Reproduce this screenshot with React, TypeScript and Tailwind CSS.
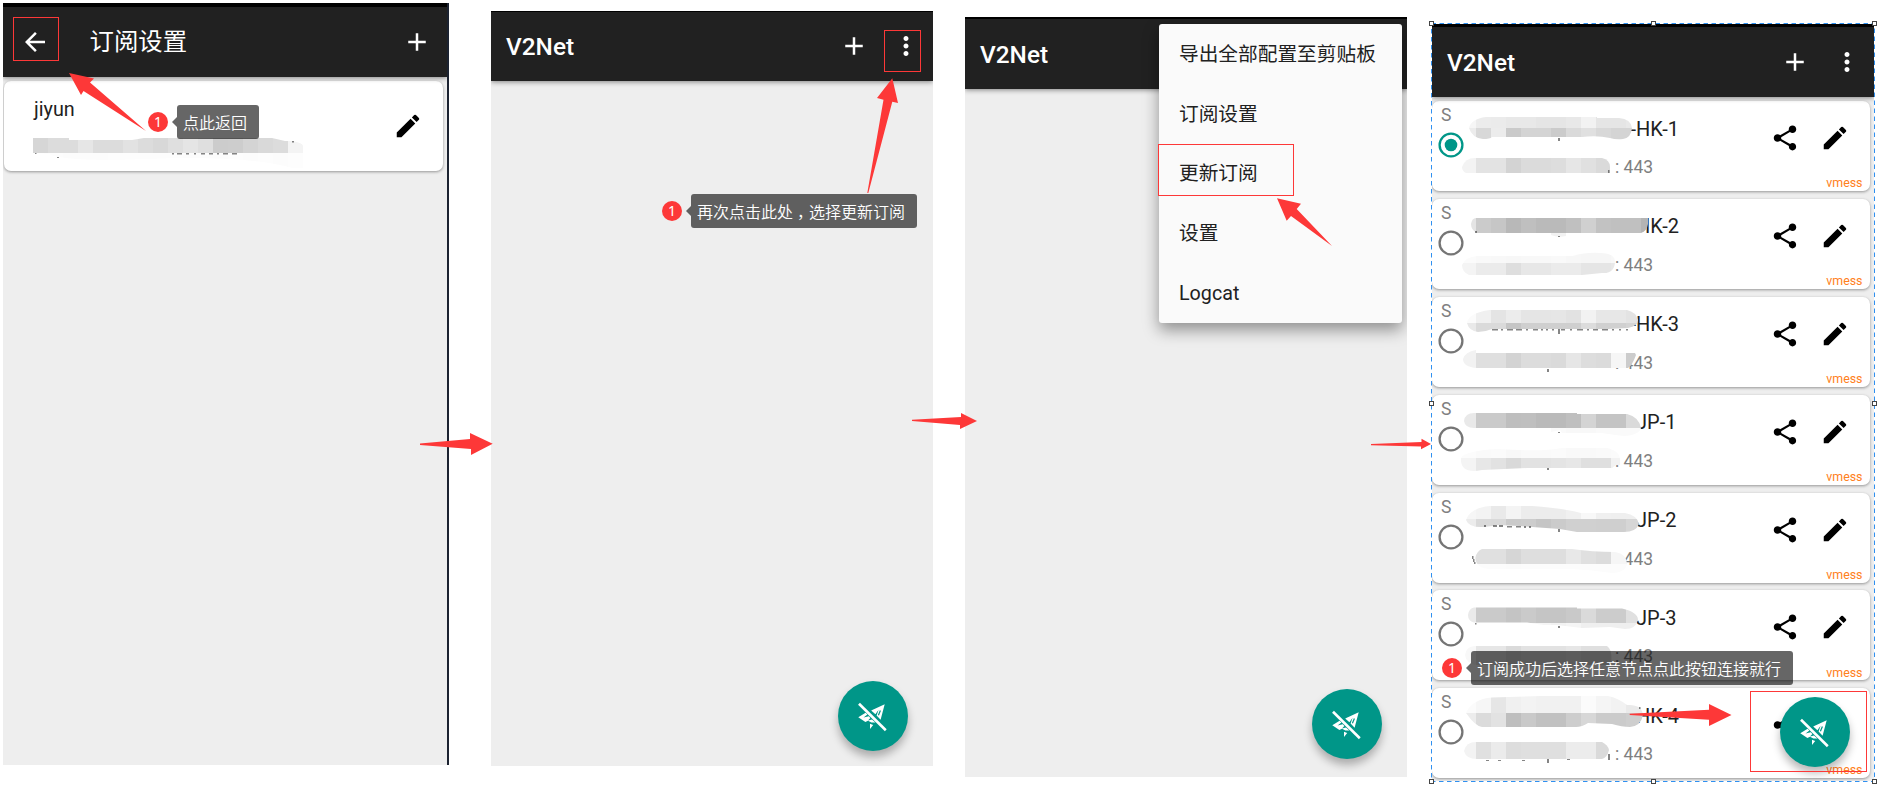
import React from "react";
import { MdAdd, MdArrowBack, MdEdit, MdMoreVert, MdShare } from "react-icons/md";

type Band = { y: number; h: number; c: string };
type Smudge = { d: string; bands: Band[]; x0?: number; marks?: number[][] };
type Node = { name: string; selected?: boolean; title: Smudge; sub: Smudge };

/* Mosaic strokes: each band is a row of 15px blocks, two hex digits per grey level. */
const nodes: Node[] = [
  {
    name: "-HK-1",
    selected: true,
    title: {
      d: "M37 27Q39 18 54 16H165V17H187Q199 18 200 27Q199 37 191 38Q184 39 178 37Q165 34 150 36H60Q58 38 51 38Q40 37 37 27Z",
      bands: [
        { y: 8, h: 19, c: "f6ecebe8e8e5e5e8f2e5e5e8" },
        { y: 27, h: 14, c: "ecd8eccad4d4cbdae0d8d4d4" },
      ],
      marks: [[126, 37, 2, 3]],
    },
    sub: {
      d: "M30 66Q33 57 43 57H170Q178 59 178 66V72H34Q30 70 30 66Z",
      bands: [{ y: 50, h: 26, c: "f3e3e3d3dbdbdde6e0dadada" }],
      marks: [[176, 69, 1.5, 3]],
    },
  },
  {
    name: "-HK-2",
    title: {
      d: "M39 25Q40 19 44 19H216V25Q215 32 209 34H45Q39 31 39 25ZM119 34H134V37Q126 39 119 36Z",
      bands: [
        { y: 10, h: 24, c: "e4cbc6b8bfbabac0d0c2c0c0b4" },
        { y: 34, h: 8, c: "f2f2f2f2f2f2f2f2" },
      ],
      marks: [[43, 32, 2, 2], [126, 37, 2, 1]],
    },
    sub: {
      d: "M30 66Q33 58 45 57H140Q155 53 168 54Q182 54 183 62Q183 75 170 74L150 76H37Q30 73 30 66Z",
      bands: [
        { y: 50, h: 14, c: "fbf9f8f7f8f8f9f7f6f6f8" },
        { y: 64, h: 14, c: "f4ebebdee7e7ebebe5e5e8" },
      ],
    },
  },
  {
    name: "-HK-3",
    title: {
      d: "M35 26Q36 16 58 13H195Q204 15 206 23Q206 29 196 31L176 32H60Q53 35 46 35Q37 34 35 26Z",
      bands: [
        { y: 8, h: 18, c: "fbf0e4ece5e5e6e2f2e7e7e3e3" },
        { y: 26, h: 12, c: "e9dadac5cfcfcfcfdcd0d0d4d4" },
      ],
      marks: [[60, 32, 6, 1.5], [69, 32, 2, 1.5], [75, 32, 6, 1.5], [84, 32, 6, 1.5], [94, 32, 2, 1.5], [101, 32, 5, 1.5], [109, 32, 2, 1.5], [114, 32, 2, 1.5], [120, 32, 2, 1.5], [126, 32, 2, 5], [129, 32, 4, 1.5], [138, 32, 2, 1.5], [145, 32, 6, 1.5], [155, 32, 2, 1.5], [161, 32, 5, 1.5], [170, 32, 6, 1.5], [180, 32, 2, 1.5], [187, 32, 2, 1.5], [194, 32, 2, 1.5]],
    },
    sub: {
      d: "M31 62Q33 55 44 53V56H203L204 58Q200 69 196 71H45Q31 70 31 62Z",
      bands: [{ y: 50, h: 24, c: "f2dfdfd3dcdcdae6dddbf6cc" }],
      marks: [[115, 72, 2, 3]],
    },
  },
  {
    name: "-JP-1",
    title: {
      d: "M32 26Q33 18 42 18H145V19H195Q207 22 209 33Q207 40 192 41Q182 40 170 38H130L128 35L119 37V33H42Q33 33 32 26Z",
      bands: [
        { y: 10, h: 23, c: "e9cacabebfbababfd4c4c4dada" },
        { y: 33, h: 9, c: "fafafafafaf7faf8f8fafafafa" },
      ],
      marks: [[126, 37, 2, 1]],
    },
    sub: {
      d: "M29 63Q32 56 65 54Q110 57 130 53H175Q188 56 188 65V70H184L180 73H95L50 75Q30 79 29 66Z",
      bands: [
        { y: 50, h: 13, c: "fcfafbf8fafafbf9f9fafb" },
        { y: 63, h: 15, c: "f4e7e2d9e2e2e4e7dfdff2" },
      ],
      marks: [[115, 73, 2, 2]],
    },
  },
  {
    name: "-JP-2",
    title: {
      d: "M34 27Q38 15 58 13H100Q130 15 149 20H193Q205 22 207 31Q204 39 192 39H145L128 36L100 34L88 33L65 32Q38 38 34 27Z",
      bands: [
        { y: 8, h: 17.5, c: "f6f3e9f4ecececf0f8f0efefef" },
        { y: 25.5, h: 16, c: "ecdad9caccc5cbd0d0cfcfd6d6" },
      ],
      marks: [[52, 32, 2, 2], [61, 32, 4, 2], [67, 32, 4, 2], [75, 33, 5, 1.5], [84, 33, 5, 1.5], [92, 33, 2, 2], [97, 33, 2, 2], [126, 36, 2, 3]],
    },
    sub: {
      d: "M43 65Q45 58 50 56H140Q160 59 183 59Q195 61 195 72Q192 80 180 80Q160 77 140 76H58Q45 76 43 65Z",
      bands: [
        { y: 50, h: 20.5, c: "ebe0e0d6dededee8e0dcf6f3" },
        { y: 70.5, h: 10, c: "fdfcfcfbfcfcfcfcfcfcfcfc" },
      ],
      marks: [[40, 63, 1.5, 3], [41, 66, 1.5, 3], [42, 69, 1.5, 2]],
    },
  },
  {
    name: "-JP-3",
    title: {
      d: "M36 25Q37 18 42 17.5H145V18.5H190Q206 22 206 30Q204 39 193 39L178 37L150 38L125 35L112 35L95 32.5H42Q36 31 36 25Z",
      bands: [
        { y: 10, h: 22.5, c: "eacacac4cac5c5c9dacccce0e0" },
        { y: 32.5, h: 9, c: "f8f5f5f2f5f5f2f5efefefefef" },
      ],
      marks: [[43, 33, 1.5, 1.5], [126, 36, 2, 2]],
    },
    sub: {
      d: "M33 65Q34 57 42 56H175Q181 60 180 75H44Q34 73 33 65Z",
      bands: [{ y: 50, h: 30, c: "f8e6e6dae2e2e2e6dfdff2f2" }],
    },
  },
  {
    name: "-HK-4",
    title: {
      d: "M34 25Q40 11 60 9.5L110 8H176Q186 10 195 17Q210 16 211 27Q209 38 198 39Q190 39 180 36L156 35Q150 39 144 39H50Q43 38 34 25Z",
      bands: [
        { y: 5, h: 20, c: "fbf6e6f0f3f1f1f1fbf5f2eaea" },
        { y: 25, h: 16, c: "ecdbe2bec9c1c1cdd7cbcbcece" },
      ],
      marks: [[207, 19, 1.5, 2]],
    },
    sub: {
      d: "M32 63Q34 54 44 54H170Q176 57 177 62Q175 70 170 71H45Q34 71 32 63Z",
      bands: [{ y: 50, h: 24, c: "f3e0ebdddfdfdfececdada" }],
      marks: [[54, 72, 3, 1], [66, 72, 3, 1], [90, 72, 3, 1], [115, 71, 2, 4], [135, 71, 3, 1], [176, 66, 2, 6]],
    },
  },
];

const bookmarkSmudge: Smudge = {
  d: "M29 57H65V59H128L140 57H268L281 60H288Q299 62 299 65V87H288Q250 76 170 77Q60 82 45 73L29 72Z",
  x0: 29,
  bands: [
    { y: 50, h: 22, c: "d6dcdce6dcdce2dcd8dfe5dfcccdd4d9dcf4" },
    { y: 72, h: 16, c: "fdfdfcfcfcfdfdfdfdfdfcfcfcfdfcfdfcfd" },
  ],
  marks: [[31, 72, 1.5, 1], [53, 76, 2, 1], [168, 72, 2, 1.5], [173, 72, 5, 1.5], [182, 72, 3, 1.5], [190, 72, 2, 1.5], [197, 72, 4, 1.5], [205, 72, 4, 1.5], [213, 72, 2, 1.5], [219, 72, 5, 1.5], [228, 72, 5, 1.5], [288, 60, 2, 1.5]],
};

function SmudgeArt({ s, id }: { s: Smudge; id: string }) {
  const x0 = s.x0 ?? 29;
  return (
    <g>
      <clipPath id={id}>
        <path d={s.d} />
      </clipPath>
      <g clipPath={`url(#${id})`} shapeRendering="crispEdges">
        {s.bands.flatMap((b, j) =>
          (b.c.match(/../g) ?? []).map((v, i) => (
            <rect key={`${j}-${i}`} x={x0 + i * 15} y={b.y} width={15} height={b.h} fill={`#${v}${v}${v}`} />
          )),
        )}
      </g>
      {s.marks?.map(([x, y, w, h], i) => (
        <rect key={i} x={x} y={y} width={w} height={h} fill="#333" fillOpacity="0.6" />
      ))}
    </g>
  );
}

function Header({ title, back, menu = true, strip }: { title: string; back?: boolean; menu?: boolean; strip: string }) {
  return (
    <header className="relative z-10 shrink-0 bg-[#212121] text-white shadow-[0_1px_5px_rgba(0,0,0,0.45)]">
      <div className={`bg-black ${strip}`} />
      <div className="flex h-[70px] items-center">
        {back && <MdArrowBack className="mr-[39.5px] ml-[17px] size-[30px]" />}
        {back ? (
          <h1 className="text-[24.4px] leading-8">{title}</h1>
        ) : (
          <h1 className="ml-[15px] pt-px text-[24.4px] leading-8 font-medium">{title}</h1>
        )}
        <div className={`ml-auto flex items-center gap-[22px] ${menu ? "pr-[12.5px]" : "pr-[15px]"}`}>
          <MdAdd className="size-[30px]" />
          {menu && <MdMoreVert className="size-[30px]" />}
        </div>
      </div>
    </header>
  );
}

function Fab({ place }: { place: string }) {
  return (
    <button
      className={`absolute z-10 flex size-[70px] items-center justify-center rounded-full bg-[#009688] shadow-[0_6px_9px_rgba(0,0,0,0.28)] ${place}`}
    >
      <svg viewBox="-18 -18 36 36" className="size-9">
        <path
          fill="#fff"
          d="M11.7-11.8L7.6 3.8L3.6-.6L5.6-6.2L2.4-1.8L-1.8-5.6ZM-14.7 1.3L-7.4-3.2L-5.6-1.4L-9.4 1.6L-4.2 .2L-2.6 2L-5 4.6L-1 3.4L2.4 6.6L-1.6 6.4L-5 4.8L-7.6 6ZM-3 7.8L.2 9L-3 13Z"
        />
        <path stroke="#009688" strokeWidth="1.2" d="M7.4-5.6L5.4-.8" />
        <path stroke="#fff" strokeWidth="2.6" d="M-14-12.2L12.8 14.2" />
      </svg>
    </button>
  );
}

function NodeCard({ node, index }: { node: Node; index: number }) {
  return (
    <li className="relative flex h-[90px] w-[438px] rounded-[7px] bg-white shadow-[0_1px_3px_rgba(0,0,0,0.38)]">
      <div className="flex w-[38px] shrink-0 flex-col">
        <span className="pt-[4px] pl-[9px] text-[17.5px] leading-5 text-[#808080]">S</span>
        <svg viewBox="0 0 26 26" className="mt-[7px] ml-[6px] size-[26px]">
          <circle cx="13" cy="13" r="11.4" fill="none" strokeWidth="2.3" stroke={node.selected ? "#009688" : "#757575"} />
          {node.selected && <circle cx="13" cy="13" r="6.3" fill="#009688" />}
        </svg>
      </div>
      <div className="flex flex-col pt-[15.5px]">
        <span className="pl-[160.5px] text-[20px] leading-6 text-[#212121]">{node.name}</span>
        <span className="mt-[16.5px] pl-[145px] text-[17.5px] leading-5 text-[#808080]">: 443</span>
      </div>
      <div className="ml-auto flex flex-col items-end">
        <div className="mt-[22px] flex gap-[19.5px] pr-[20.5px] text-black">
          <MdShare className="size-[30px]" />
          <MdEdit className="size-[30px]" />
        </div>
        <span className="mt-auto pr-[7.5px] pb-[0.9px] text-[12.4px] leading-[15px] font-[450] text-[#ff8020]">vmess</span>
      </div>
      <svg className="absolute top-0 left-0 h-[90px] w-[230px]">
        <SmudgeArt s={node.title} id={`t${index}`} />
        <SmudgeArt s={node.sub} id={`s${index}`} />
      </svg>
    </li>
  );
}

function Tip({ text, place, width }: { text: string; place: string; width: string }) {
  const parts = text.split("，");
  return (
    <div className={`absolute z-20 flex items-center text-white ${place}`}>
      <span className="flex size-5 items-center justify-center rounded-full bg-[#fd3838] font-['Noto_Sans','Open_Sans',sans-serif] text-[14px] leading-5">
        1
      </span>
      <svg viewBox="0 0 5 10" className="ml-1 h-2.5 w-[5px]">
        <path d="M5 0V10L0 5Z" fill="#000" fillOpacity="0.6" />
      </svg>
      <span
        className={`flex h-[34px] items-center rounded-[3px] bg-black/60 pl-[6px] font-['Noto_Sans_CJK_SC',sans-serif] text-[16px] leading-6 font-[350] whitespace-nowrap ${width}`}
      >
        {parts[0]}
        {parts.length > 1 && <span className="w-4 pl-1 [font-feature-settings:'halt']">，</span>}
        {parts[1]}
      </span>
    </div>
  );
}

const handles = [
  [1431.5, 23.5], [1653.5, 23.5], [1874.5, 23.5],
  [1431.5, 403.5], [1874.5, 403.5],
  [1431.5, 781.5], [1653.5, 781.5], [1874.5, 781.5],
];

function Annotations() {
  return (
    <svg viewBox="0 0 1897 809" className="pointer-events-none absolute top-0 left-0 z-30 h-[809px] w-[1897px]">
      <g fill="none" stroke="#fd3838" shapeRendering="crispEdges">
        <rect x="13.5" y="17.5" width="45" height="43" />
        <rect x="884.5" y="30.5" width="36" height="41" />
        <rect x="1158.5" y="144.5" width="135" height="51" />
        <rect x="1750.5" y="691.5" width="116" height="80" />
      </g>
      <g fill="#fd3838">
        <path d="M69 73L94 78.5L90 82.5L146 131L83.5 91L81 95Z" />
        <path d="M892.3 78.3L877 98L883.5 99.7L867.3 193L868.3 193L892.3 101.7L898 103Z" />
        <path d="M1277 198.3L1301 203.7L1296.7 209L1332 246L1291 216L1286.7 220.7Z" />
        <path d="M420 443.6V445L471 449V455L492.7 443.7L470 433V439Z" />
        <path d="M912 419.7V421L960 425V429L977 421L961 413V417Z" />
        <path d="M1371 444V445.2L1421 446.5V449.3L1431 444L1421.5 438.7V442Z" />
        <path d="M1629.7 713.7V715L1709 719.7V726L1731.5 715L1709 704V709.8Z" />
      </g>
      <rect x="1431.5" y="23.5" width="443" height="758" fill="none" stroke="#2f90f0" strokeDasharray="4.5 3.5" />
      <g fill="#fff" stroke="#444" shapeRendering="crispEdges">
        {handles.map(([x, y]) => (
          <rect key={`${x}-${y}`} x={x - 2} y={y - 2} width="4" height="4" />
        ))}
      </g>
    </svg>
  );
}

const menuItems = ["导出全部配置至剪贴板", "订阅设置", "更新订阅", "设置", "Logcat"];

export default function App() {
  return (
    <main className="relative flex h-[809px] w-[1897px] items-start overflow-hidden bg-white font-[Roboto,'Noto_Sans_CJK_SC',sans-serif]">
      <section className="relative mt-[3px] ml-[3px] flex h-[762px] w-[446px] flex-col overflow-hidden border-r-2 border-[#1c2331] bg-[#eeeeee]">
        <Header title="订阅设置" back menu={false} strip="h-1" />
        <div className="relative mt-1 ml-px flex h-[90px] w-[439px] items-center justify-between rounded-[7px] bg-white pr-[20px] pl-[30px] shadow-[0_1px_3px_rgba(0,0,0,0.38)]">
          <span className="mb-[33px] text-[19.8px] leading-6 text-[#212121]">jiyun</span>
          <MdEdit className="size-[30px] text-black" />
          <svg className="absolute top-0 left-0 h-[90px] w-[320px]">
            <SmudgeArt s={bookmarkSmudge} id="bm" />
          </svg>
        </div>
      </section>

      <section className="relative mt-[11px] ml-[42px] flex h-[755px] w-[442px] flex-col overflow-hidden bg-[#eeeeee]">
        <Header title="V2Net" strip="h-px -mb-px" />
        <Fab place="right-[25px] bottom-[15px]" />
      </section>

      <section className="relative mt-[17px] ml-8 flex h-[760px] w-[442px] flex-col overflow-hidden bg-[#eeeeee]">
        <Header title="V2Net" strip="h-[2px]" />
        <ul className="absolute top-[7px] right-[5px] z-20 w-[243px] rounded-[3px] bg-[#fafafa] pt-px text-[19.7px] text-[#212121] shadow-[0_7px_16px_rgba(0,0,0,0.4)]">
          {menuItems.map((m) => (
            <li key={m} className="flex h-[59.7px] items-center pl-[20px] leading-6">
              {m}
            </li>
          ))}
        </ul>
        <Fab place="right-[25px] bottom-[18px]" />
      </section>

      <section className="relative mt-6 ml-[25px] flex h-[757px] w-[442px] flex-col overflow-hidden bg-[#eeeeee]">
        <Header title="V2Net" strip="h-[3px]" />
        <ul className="flex flex-col gap-[7.9px] pt-1">
          {nodes.map((n, i) => (
            <NodeCard key={n.name} node={n} index={i} />
          ))}
        </ul>
        <Fab place="right-[24px] bottom-[14px]" />
      </section>

      <Tip text="点此返回" place="top-[105px] left-[148px]" width="w-[82px]" />
      <Tip text="再次点击此处，选择更新订阅" place="top-[194px] left-[662px]" width="w-[226px]" />
      <Tip text="订阅成功后选择任意节点点此按钮连接就行" place="top-[651px] left-[1442px]" width="w-[322px]" />
      <Annotations />
    </main>
  );
}
